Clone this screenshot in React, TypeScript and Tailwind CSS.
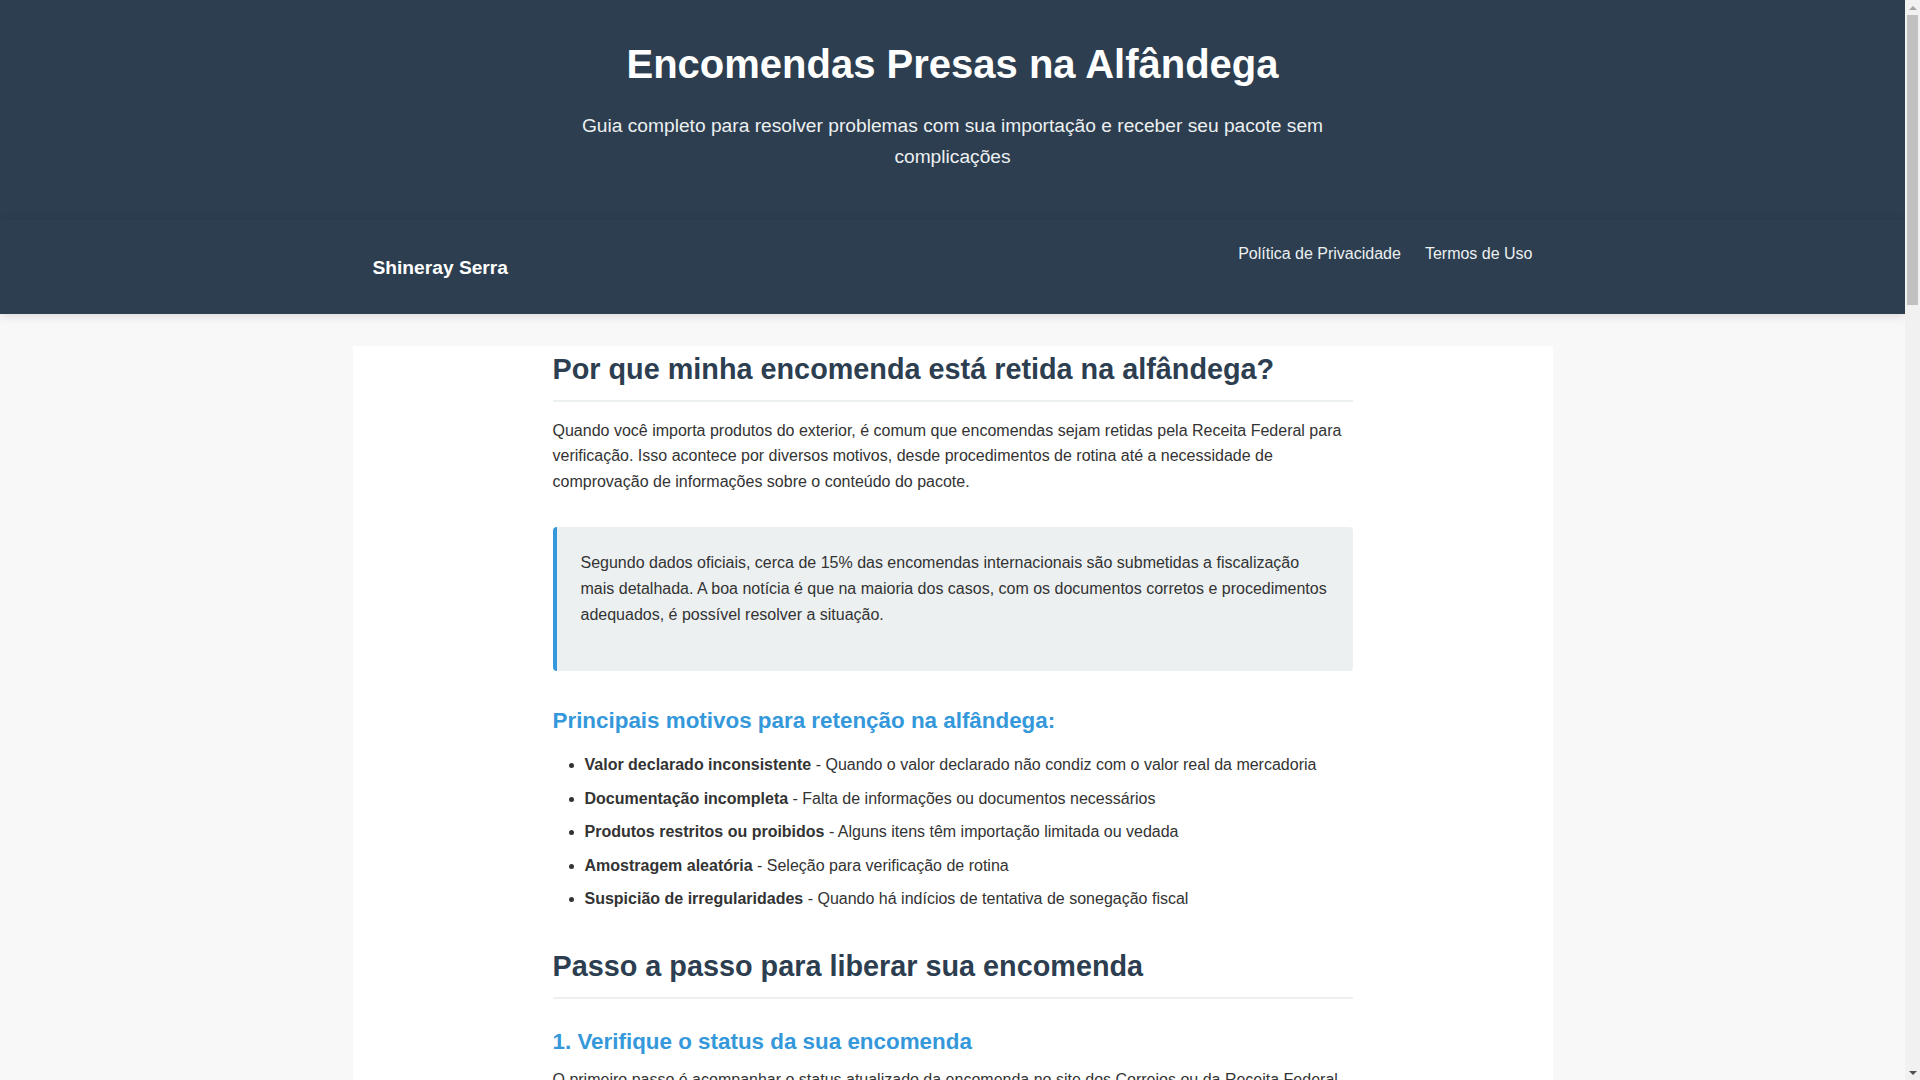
const motivos = [
  { title: "Valor declarado inconsistente", text: "Quando o valor declarado não condiz com o valor real da mercadoria" },
  { title: "Documentação incompleta", text: "Falta de informações ou documentos necessários" },
  { title: "Produtos restritos ou proibidos", text: "Alguns itens têm importação limitada ou vedada" },
  { title: "Amostragem aleatória", text: "Seleção para verificação de rotina" },
  { title: "Suspicião de irregularidades", text: "Quando há indícios de tentativa de sonegação fiscal" },
];

function Scrollbar() {
  return (
    <div className="w-[15px] shrink-0 bg-[#f1f1f1] flex flex-col items-center">
      <div className="h-[15px] flex items-center justify-center">
        <svg width="8" height="4" viewBox="0 0 8 4">
          <path d="M0 4 L4 0 L8 4 Z" fill="#a3a3a3" />
        </svg>
      </div>
      <div className="w-[11px] h-[290px] bg-[#c1c1c1]" />
      <div className="flex-1" />
      <div className="h-[15px] flex items-center justify-center">
        <svg width="8" height="4" viewBox="0 0 8 4">
          <path d="M0 0 L8 0 L4 4 Z" fill="#505050" />
        </svg>
      </div>
    </div>
  );
}

export default function App() {
  return (
    <div className="h-screen flex overflow-hidden bg-[#f8f8f8] font-['Liberation_Sans',Arial,sans-serif] text-[#333]">
      <div className="flex-1 min-w-0 overflow-hidden">
        <header className="h-[220px] bg-[#2c3e50] flex flex-col items-center pt-[40px] text-center">
          <h1 className="text-[40px] leading-[48px] font-bold text-white">
            Encomendas Presas na Alfândega
          </h1>
          <p className="mt-[23px] max-w-[800px] text-[19.2px] leading-[30.7px] text-[#ecf0f1]">
            Guia completo para resolver problemas com sua importação e receber seu pacote sem complicações
          </p>
        </header>

        <nav className="h-[94px] bg-[#2c3e50] shadow-[0_2px_10px_rgba(0,0,0,0.12)] relative">
          <div className="max-w-[1200px] mx-auto h-full px-5 flex justify-between items-center">
            <a className="text-[19.2px] font-bold text-white mt-[2px]">Shineray Serra</a>
            <div className="flex gap-6 mb-[27px] text-base text-[#ecf0f1]">
              <a>Política de Privacidade</a>
              <a>Termos de Uso</a>
            </div>
          </div>
        </nav>

        <main className="max-w-[1200px] mx-auto mt-[32px] bg-white pt-[6px] pb-10">
          <article className="max-w-[800px] mx-auto">
            <h2 className="text-[28.8px] leading-[1.2] font-bold text-[#2c3e50] pb-[13px] border-b-2 border-[#ecf0f1] mb-[16px]">
              Por que minha encomenda está retida na alfândega?
            </h2>
            <p className="text-base leading-[25.6px] mb-[33px]">
              Quando você importa produtos do exterior, é comum que encomendas sejam retidas pela Receita Federal para verificação. Isso acontece por diversos motivos, desde procedimentos de rotina até a necessidade de comprovação de informações sobre o conteúdo do pacote.
            </p>

            <blockquote className="bg-[#ecf0f1] border-l-4 border-[#3498db] rounded-[4px] pl-6 pr-6 pt-[23px] pb-[44px]">
              <p className="text-base leading-[25.6px]">
                Segundo dados oficiais, cerca de 15% das encomendas internacionais são submetidas a fiscalização mais detalhada. A boa notícia é que na maioria dos casos, com os documentos corretos e procedimentos adequados, é possível resolver a situação.
              </p>
            </blockquote>

            <h3 className="mt-[37px] text-[22.4px] leading-[1.2] font-bold text-[#3498db] mb-[17px]">
              Principais motivos para retenção na alfândega:
            </h3>
            <ul className="list-disc pl-8">
              {motivos.map((m) => (
                <li key={m.title} className="text-base leading-[25.6px] mb-2">
                  <strong className="font-bold text-[#333]">{m.title}</strong> - {m.text}
                </li>
              ))}
            </ul>

            <h2 className="mt-[37px] text-[28.8px] leading-[1.2] font-bold text-[#2c3e50] pb-[13px] border-b-2 border-[#ecf0f1]">
              Passo a passo para liberar sua encomenda
            </h2>
            <h3 className="mt-[30px] text-[22.4px] leading-[1.2] font-bold text-[#3498db] mb-[12px]">
              1. Verifique o status da sua encomenda
            </h3>
            <p className="text-base leading-[25.6px]">
              O primeiro passo é acompanhar o status atualizado da encomenda no site dos Correios ou da Receita Federal. Lá você encontrará informações sobre o motivo da retenção e os próximos passos necessários.
            </p>
          </article>
        </main>
      </div>
      <Scrollbar />
    </div>
  );
}
